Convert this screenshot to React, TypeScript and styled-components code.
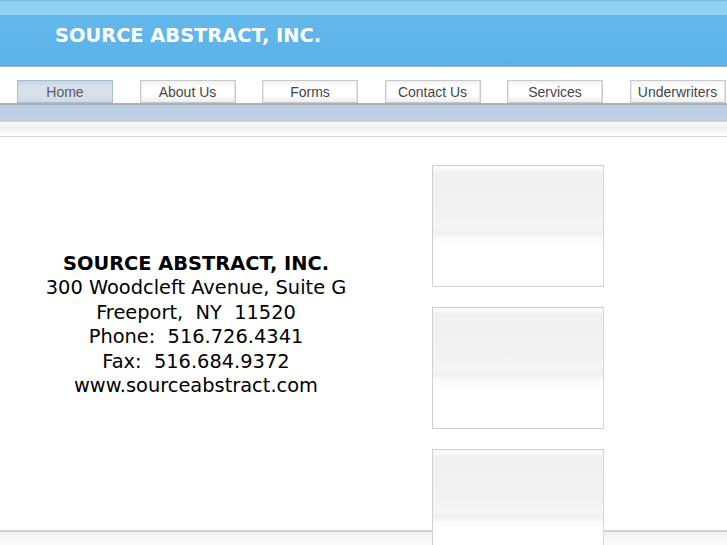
import React from "react";
import styled, { createGlobalStyle } from "styled-components";

const Global = createGlobalStyle`
  html, body { margin: 0; padding: 0; background: #fff; }
  body { font-family: "DejaVu Sans", Verdana, sans-serif; }
`;

const Page = styled.div`
  width: 727px;
  height: 545px;
  overflow: hidden;
  display: flex;
  flex-direction: column;
`;

const Header = styled.header`
  height: 67px;
  flex: none;
  border-bottom: 1px solid #9fb0bf;
  background: linear-gradient(
    to bottom,
    #7db9e2 0px,
    #7db9e2 1px,
    #8fd0f3 1px,
    #8fd0f3 15px,
    #63b8ec 15px,
    #5cb2e8 66px
  );
  display: flex;
  align-items: center;
  padding-left: 55px;
  padding-top: 4px;
  box-sizing: border-box;
`;

const Title = styled.h1`
  margin: 0;
  color: #fff;
  font-family: "DejaVu Sans", Verdana, sans-serif;
  font-weight: bold;
  font-size: 19.4px;
`;

const Nav = styled.nav`
  height: 38px;
  flex: none;
  display: flex;
  align-items: flex-start;
  padding-top: 13px;
  padding-left: 17px;
  gap: 26.5px;
  box-sizing: border-box;
  background: #fff;
  border-bottom: 2px solid #a9b3bd;
`;

const NavButton = styled.div<{ $active?: boolean }>`
  width: 96px;
  height: 23px;
  box-sizing: border-box;
  flex: none;
  display: flex;
  align-items: center;
  justify-content: center;
  font-family: "Liberation Sans", Arial, sans-serif;
  font-size: 14px;
  color: ${(p) => (p.$active ? "#575c63" : "#454545")};
  border: 1px solid ${(p) => (p.$active ? "#a8bcd2" : "#c9c9c9")};
  background: ${(p) =>
    p.$active
      ? "linear-gradient(to bottom, #c9d4e2 0%, #d8e0ea 30%, #d8e0ea 70%, #cfd8e4 100%)"
      : "linear-gradient(to bottom, #f0f0f0 0%, #ffffff 25%, #ffffff 70%, #ececec 100%)"};
  box-shadow: ${(p) =>
    p.$active ? "none" : "inset 1px 0 0 #eaeaea, inset -1px 0 0 #e4e4e4"};
`;

const BlueBand = styled.div`
  height: 17px;
  flex: none;
  background: linear-gradient(to bottom, #bccee2 0%, #c0d1e4 100%);
`;

const GreyBand = styled.div`
  height: 15px;
  flex: none;
  box-sizing: border-box;
  border-bottom: 1px solid #d6d6d6;
  background: linear-gradient(to bottom, #ffffff 0%, #ededed 40%, #f7f7f7 70%, #ffffff 100%);
`;

const Main = styled.main`
  height: 393px;
  flex: none;
  display: flex;
  position: relative;
  z-index: 1;
`;

const Info = styled.div`
  width: 392px;
  padding-top: 115px;
  text-align: center;
  font-family: "DejaVu Sans", Verdana, sans-serif;
  font-size: 19.4px;
  line-height: 24.4px;
  color: #000;
`;

const InfoName = styled.div`
  font-weight: bold;
`;

const Boxes = styled.div`
  margin-left: 40px;
  padding-top: 28px;
  display: flex;
  flex-direction: column;
  gap: 20px;
`;

const Box = styled.div`
  width: 172px;
  height: 122px;
  flex: none;
  box-sizing: border-box;
  border: 1px solid #cfcfcf;
  border-right-color: #d6d6d6;
  background: linear-gradient(
    to bottom,
    #fafafa 0px,
    #fafafa 3px,
    #f1f1f1 6px,
    #f2f2f2 45px,
    #f5f5f5 62px,
    #f0f0f0 67px,
    #fbfbfb 72px,
    #ffffff 82px,
    #ffffff 100%
  );
`;

const Footer = styled.footer`
  flex: 1;
  border-top: 2px solid #d2d2d2;
  background: linear-gradient(to bottom, #f1f1f1 0%, #fafafa 100%);
`;

const navItems = ["Home", "About Us", "Forms", "Contact Us", "Services", "Underwriters"];

export default function App() {
  return (
    <Page>
      <Global />
      <Header>
        <Title>SOURCE ABSTRACT, INC.</Title>
      </Header>
      <Nav>
        {navItems.map((item, i) => (
          <NavButton key={item} $active={i === 0}>
            {item}
          </NavButton>
        ))}
      </Nav>
      <BlueBand />
      <GreyBand />
      <Main>
        <Info>
          <InfoName>SOURCE ABSTRACT, INC.</InfoName>
          <div>300 Woodcleft Avenue, Suite G</div>
          <div>Freeport,&nbsp; NY&nbsp; 11520</div>
          <div>Phone:&nbsp; 516.726.4341</div>
          <div>Fax:&nbsp; 516.684.9372</div>
          <div>www.sourceabstract.com</div>
        </Info>
        <Boxes>
          <Box />
          <Box />
          <Box />
        </Boxes>
      </Main>
      <Footer />
    </Page>
  );
}
